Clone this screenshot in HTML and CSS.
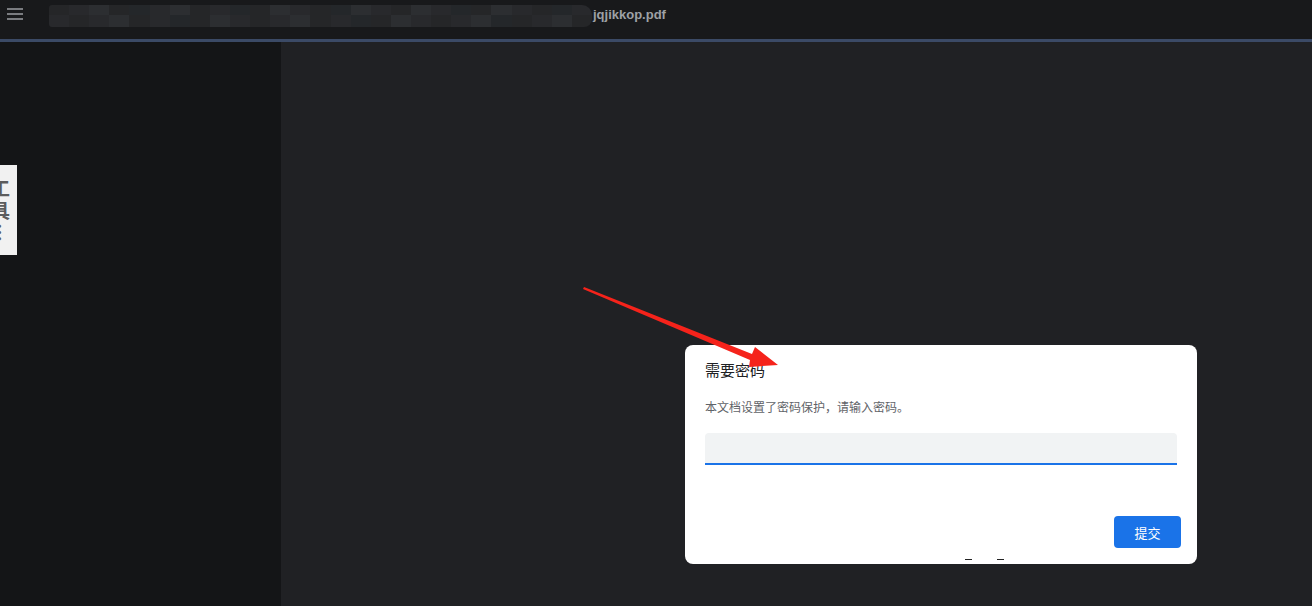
FILE: index.html
```html
<!DOCTYPE html>
<html lang="zh">
<head>
<meta charset="utf-8">
<title>PDF</title>
<link rel="stylesheet" href="styles.css">
</head>
<body>
<div class="app">
  <header class="topbar">
    <div class="menu">
      <span></span><span></span><span></span>
    </div>
    <div class="title">
      <div class="blur">
        <div class="row top">
          <i class="c1"></i><i class="c2"></i><i class="c3"></i><i class="c1"></i><i class="c4"></i><i class="c2"></i><i class="c3"></i><i class="c1"></i><i class="c2"></i><i class="c4"></i><i class="c1"></i><i class="c3"></i><i class="c2"></i><i class="c1"></i><i class="c4"></i><i class="c3"></i><i class="c2"></i><i class="c1"></i><i class="c3"></i><i class="c2"></i><i class="c4"></i><i class="c1"></i><i class="c3"></i><i class="c2"></i><i class="c1"></i><i class="c4"></i><i class="c2"></i>
        </div>
        <div class="row bottom">
          <i class="c2"></i><i class="c1"></i><i class="c2"></i><i class="c3"></i><i class="c1"></i><i class="c2"></i><i class="c4"></i><i class="c1"></i><i class="c3"></i><i class="c2"></i><i class="c1"></i><i class="c2"></i><i class="c3"></i><i class="c1"></i><i class="c2"></i><i class="c4"></i><i class="c1"></i><i class="c3"></i><i class="c2"></i><i class="c1"></i><i class="c2"></i><i class="c3"></i><i class="c4"></i><i class="c1"></i><i class="c2"></i><i class="c3"></i><i class="c1"></i>
        </div>
      </div>
      <span class="fname">jqjikkop.pdf</span>
    </div>
  </header>
  <div class="divider"></div>
  <div class="body">
    <aside class="sidebar">
      <div class="tab"><span class="tab-text">工具…</span></div>
    </aside>
    <main class="viewer"></main>
  </div>

  <div class="dialog">
    <h2 class="dlg-title">需要密码</h2>
    <p class="dlg-text">本文档设置了密码保护，请输入密码。</p>
    <div class="field"></div>
    <div class="actions">
      <button class="submit">提交</button>
    </div>
    <div class="marks"><span></span><span></span></div>
  </div>

  <svg class="arrow" width="1312" height="606" viewBox="0 0 1312 606">
    <polygon points="584,287 752,354 755,347 778,365 749,367 750,360 583,289" fill="#f5231b"/>
  </svg>
</div>
</body>
</html>
```

FILE: styles.css
```css
* { box-sizing: border-box; }
html, body { margin: 0; padding: 0; }
body {
  width: 1312px;
  height: 606px;
  overflow: hidden;
  background: #202124;
  font-family: "Noto Sans CJK SC", "Liberation Sans", Arial, sans-serif;
}
.app {
  position: relative;
  width: 1312px;
  height: 606px;
  display: flex;
  flex-direction: column;
}
.topbar {
  height: 39px;
  background: #18191b;
  display: flex;
  align-items: flex-start;
  flex-shrink: 0;
}
.menu {
  width: 16px;
  margin: 8px 0 0 7px;
  display: flex;
  flex-direction: column;
  gap: 3px;
}
.menu span {
  display: block;
  height: 2px;
  background: #7a7c80;
}
.title {
  display: flex;
  align-items: flex-start;
  margin-left: 26px;
  margin-top: 5px;
}
.blur {
  width: 543px;
  height: 22px;
  display: flex;
  flex-direction: column;
  border-radius: 3px 10px 8px 3px;
  overflow: hidden;
}
.blur .row { display: flex; }
.blur .row.top { height: 10px; }
.blur .row.bottom { height: 12px; }
.blur i { flex: 1; display: block; }
.blur .c1 { background: #252628; }
.blur .c2 { background: #28292c; }
.blur .c3 { background: #2c2e31; }
.blur .c4 { background: #24272a; }
.fname {
  color: #9ea1a6;
  font-family: "Liberation Sans", Arial, sans-serif;
  font-size: 13px;
  font-weight: bold;
  line-height: 18px;
  margin-left: 1px;
  margin-top: 1px;
}
.divider {
  height: 3px;
  background: #3b4a66;
  flex-shrink: 0;
}
.body {
  flex: 1;
  display: flex;
}
.sidebar {
  width: 281px;
  background: #141517;
  padding-top: 123px;
  overflow: hidden;
}
.tab {
  width: 17px;
  height: 90px;
  background: #f1f1f1;
  overflow: hidden;
  padding-top: 14px;
}
.tab-text {
  display: block;
  width: 19px;
  margin-left: -9px;
  color: #5c5c5c;
  font-size: 19px;
  font-weight: bold;
  line-height: 19px;
  writing-mode: vertical-rl;
  letter-spacing: 3px;
}
.viewer {
  flex: 1;
  background: #202124;
}
.dialog {
  position: absolute;
  left: 685px;
  top: 345px;
  width: 512px;
  height: 219px;
  background: #ffffff;
  border-radius: 8px;
  padding: 15px 20px 0 20px;
}
.dlg-title {
  margin: 0;
  font-size: 15px;
  font-weight: normal;
  color: #202124;
  line-height: 20px;
}
.dlg-text {
  margin: 19px 0 0 0;
  font-size: 12px;
  color: #5f6368;
  line-height: 16px;
}
.field {
  margin-top: 18px;
  height: 32px;
  background: #f1f3f4;
  border-radius: 4px 4px 0 0;
  border-bottom: 2px solid #1a73e8;
}
.actions {
  display: flex;
  justify-content: flex-end;
  margin-top: 51px;
  margin-right: -4px;
}
.submit {
  width: 67px;
  height: 32px;
  border: none;
  border-radius: 4px;
  background: #1a73e8;
  color: #ffffff;
  font-family: "Noto Sans CJK SC", sans-serif;
  font-size: 13px;
  padding: 0;
}
.marks {
  display: flex;
  gap: 25px;
  margin-left: 260px;
  margin-top: 11px;
}
.marks span {
  display: block;
  width: 7px;
  height: 1px;
  background: #222;
}
.arrow {
  position: absolute;
  left: 0;
  top: 0;
  pointer-events: none;
}
```
